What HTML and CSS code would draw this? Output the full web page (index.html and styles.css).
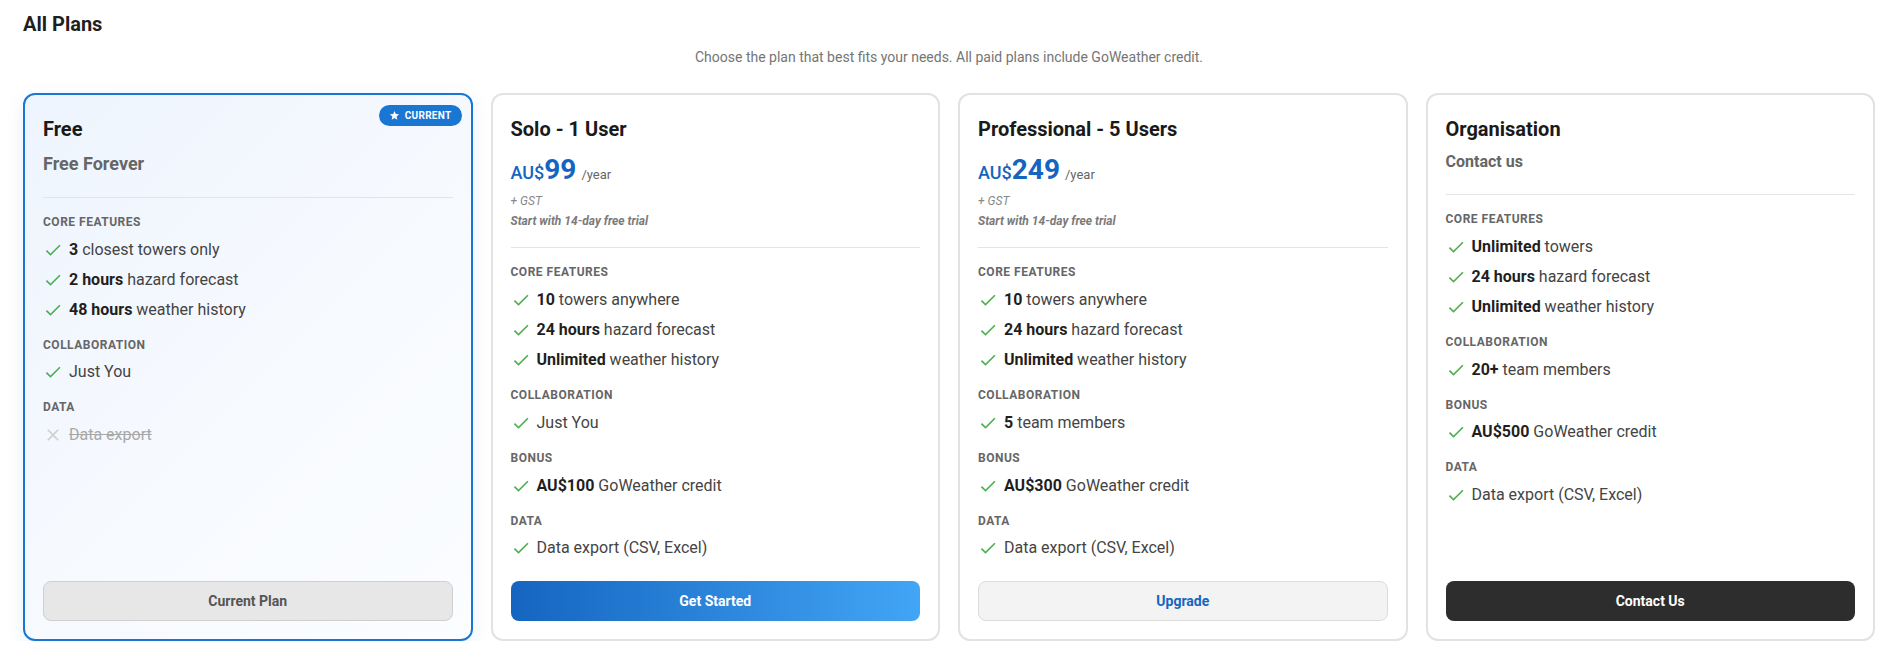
FILE: index.html
```html
<!doctype html>
<html>
<head>
  <title>All Plans</title>
  <link rel="stylesheet" href="styles.css">
</head>
<body>
  <h1>All Plans</h1>
  <p class="intro">Choose the plan that best fits your needs. All paid plans include GoWeather credit.</p>

  <div class="plans">
    <!-- free -->
    <div class="plan current">
      <span class="badge">
        <svg viewBox="0 0 24 24"><path d="M12 17.27 18.18 21l-1.64-7.03L22 9.24l-7.19-.61L12 2 9.19 8.63 2 9.24l5.46 4.73L5.82 21z"/></svg>
        Current
      </span>
      <div class="plan-head">
        <h3>Free</h3>
        <div class="sub">Free Forever</div>
      </div>
      <div class="section">
        <div class="label">Core features</div>
        <ul>
          <li><svg class="ok" viewBox="0 0 24 24"><path d="M9 16.17 4.83 12l-1.42 1.41L9 19 21 7l-1.41-1.41z"/></svg><span><b>3</b> closest towers only</span></li>
          <li><svg class="ok" viewBox="0 0 24 24"><path d="M9 16.17 4.83 12l-1.42 1.41L9 19 21 7l-1.41-1.41z"/></svg><span><b>2 hours</b> hazard forecast</span></li>
          <li><svg class="ok" viewBox="0 0 24 24"><path d="M9 16.17 4.83 12l-1.42 1.41L9 19 21 7l-1.41-1.41z"/></svg><span><b>48 hours</b> weather history</span></li>
        </ul>
      </div>
      <div class="section">
        <div class="label">Collaboration</div>
        <ul>
          <li><svg class="ok" viewBox="0 0 24 24"><path d="M9 16.17 4.83 12l-1.42 1.41L9 19 21 7l-1.41-1.41z"/></svg><span>Just You</span></li>
        </ul>
      </div>
      <div class="section">
        <div class="label">Data</div>
        <ul>
          <li class="off"><svg class="no" viewBox="0 0 24 24"><path d="M19 6.41 17.59 5 12 10.59 6.41 5 5 6.41 10.59 12 5 17.59 6.41 19 12 13.41 17.59 19 19 17.59 13.41 12z"/></svg><span>Data export</span></li>
        </ul>
      </div>
      <button class="btn btn-current">Current Plan</button>
    </div>

    <!-- solo -->
    <div class="plan">
      <div class="plan-head">
        <h3>Solo - 1 User</h3>
        <div class="price"><span class="cur">AU$</span>99<span class="per">/year</span></div>
        <div class="gst">+ GST</div>
        <div class="trial">Start with 14-day free trial</div>
      </div>
      <div class="section">
        <div class="label">Core features</div>
        <ul>
          <li><svg class="ok" viewBox="0 0 24 24"><path d="M9 16.17 4.83 12l-1.42 1.41L9 19 21 7l-1.41-1.41z"/></svg><span><b>10</b> towers anywhere</span></li>
          <li><svg class="ok" viewBox="0 0 24 24"><path d="M9 16.17 4.83 12l-1.42 1.41L9 19 21 7l-1.41-1.41z"/></svg><span><b>24 hours</b> hazard forecast</span></li>
          <li><svg class="ok" viewBox="0 0 24 24"><path d="M9 16.17 4.83 12l-1.42 1.41L9 19 21 7l-1.41-1.41z"/></svg><span><b>Unlimited</b> weather history</span></li>
        </ul>
      </div>
      <div class="section">
        <div class="label">Collaboration</div>
        <ul>
          <li><svg class="ok" viewBox="0 0 24 24"><path d="M9 16.17 4.83 12l-1.42 1.41L9 19 21 7l-1.41-1.41z"/></svg><span>Just You</span></li>
        </ul>
      </div>
      <div class="section">
        <div class="label">Bonus</div>
        <ul>
          <li><svg class="ok" viewBox="0 0 24 24"><path d="M9 16.17 4.83 12l-1.42 1.41L9 19 21 7l-1.41-1.41z"/></svg><span><b>AU$100</b> GoWeather credit</span></li>
        </ul>
      </div>
      <div class="section">
        <div class="label">Data</div>
        <ul>
          <li><svg class="ok" viewBox="0 0 24 24"><path d="M9 16.17 4.83 12l-1.42 1.41L9 19 21 7l-1.41-1.41z"/></svg><span>Data export (CSV, Excel)</span></li>
        </ul>
      </div>
      <button class="btn btn-primary">Get Started</button>
    </div>

    <!-- professional -->
    <div class="plan">
      <div class="plan-head">
        <h3>Professional - 5 Users</h3>
        <div class="price"><span class="cur">AU$</span>249<span class="per">/year</span></div>
        <div class="gst">+ GST</div>
        <div class="trial">Start with 14-day free trial</div>
      </div>
      <div class="section">
        <div class="label">Core features</div>
        <ul>
          <li><svg class="ok" viewBox="0 0 24 24"><path d="M9 16.17 4.83 12l-1.42 1.41L9 19 21 7l-1.41-1.41z"/></svg><span><b>10</b> towers anywhere</span></li>
          <li><svg class="ok" viewBox="0 0 24 24"><path d="M9 16.17 4.83 12l-1.42 1.41L9 19 21 7l-1.41-1.41z"/></svg><span><b>24 hours</b> hazard forecast</span></li>
          <li><svg class="ok" viewBox="0 0 24 24"><path d="M9 16.17 4.83 12l-1.42 1.41L9 19 21 7l-1.41-1.41z"/></svg><span><b>Unlimited</b> weather history</span></li>
        </ul>
      </div>
      <div class="section">
        <div class="label">Collaboration</div>
        <ul>
          <li><svg class="ok" viewBox="0 0 24 24"><path d="M9 16.17 4.83 12l-1.42 1.41L9 19 21 7l-1.41-1.41z"/></svg><span><b>5</b> team members</span></li>
        </ul>
      </div>
      <div class="section">
        <div class="label">Bonus</div>
        <ul>
          <li><svg class="ok" viewBox="0 0 24 24"><path d="M9 16.17 4.83 12l-1.42 1.41L9 19 21 7l-1.41-1.41z"/></svg><span><b>AU$300</b> GoWeather credit</span></li>
        </ul>
      </div>
      <div class="section">
        <div class="label">Data</div>
        <ul>
          <li><svg class="ok" viewBox="0 0 24 24"><path d="M9 16.17 4.83 12l-1.42 1.41L9 19 21 7l-1.41-1.41z"/></svg><span>Data export (CSV, Excel)</span></li>
        </ul>
      </div>
      <button class="btn btn-light">Upgrade</button>
    </div>

    <!-- organisation -->
    <div class="plan">
      <div class="plan-head">
        <h3>Organisation</h3>
        <div class="sub small">Contact us</div>
      </div>
      <div class="section">
        <div class="label">Core features</div>
        <ul>
          <li><svg class="ok" viewBox="0 0 24 24"><path d="M9 16.17 4.83 12l-1.42 1.41L9 19 21 7l-1.41-1.41z"/></svg><span><b>Unlimited</b> towers</span></li>
          <li><svg class="ok" viewBox="0 0 24 24"><path d="M9 16.17 4.83 12l-1.42 1.41L9 19 21 7l-1.41-1.41z"/></svg><span><b>24 hours</b> hazard forecast</span></li>
          <li><svg class="ok" viewBox="0 0 24 24"><path d="M9 16.17 4.83 12l-1.42 1.41L9 19 21 7l-1.41-1.41z"/></svg><span><b>Unlimited</b> weather history</span></li>
        </ul>
      </div>
      <div class="section">
        <div class="label">Collaboration</div>
        <ul>
          <li><svg class="ok" viewBox="0 0 24 24"><path d="M9 16.17 4.83 12l-1.42 1.41L9 19 21 7l-1.41-1.41z"/></svg><span><b>20+</b> team members</span></li>
        </ul>
      </div>
      <div class="section">
        <div class="label">Bonus</div>
        <ul>
          <li><svg class="ok" viewBox="0 0 24 24"><path d="M9 16.17 4.83 12l-1.42 1.41L9 19 21 7l-1.41-1.41z"/></svg><span><b>AU$500</b> GoWeather credit</span></li>
        </ul>
      </div>
      <div class="section">
        <div class="label">Data</div>
        <ul>
          <li><svg class="ok" viewBox="0 0 24 24"><path d="M9 16.17 4.83 12l-1.42 1.41L9 19 21 7l-1.41-1.41z"/></svg><span>Data export (CSV, Excel)</span></li>
        </ul>
      </div>
      <button class="btn btn-dark">Contact Us</button>
    </div>
  </div>
</body>
</html>
```

FILE: styles.css
```css
body {
  font-family: Roboto, "Noto Sans", Arial, sans-serif;
  color: #444;
  margin: 0;
  padding: 10px 26px 0 23px;
  background: #fff;
}

h1 {
  font-size: 20px;
  line-height: 1.4;
  font-weight: 700;
  color: #1f1f1f;
  margin: 0;
}
.intro {
  text-align: center;
  font-size: 14px;
  line-height: 1.4;
  color: #757575;
  margin: 10px 0 25px;
}

.plans {
  display: grid;
  grid-template-columns: repeat(4, 1fr);
  gap: 18px;
}
.plan {
  position: relative;
  display: flex;
  flex-direction: column;
  padding: 20px 18px 18px;
  border: 2px solid #e2e2e2;
  border-radius: 12px;
  background: #fff;
}
.plan.current {
  border-color: #1976d2;
  background: linear-gradient(135deg, #eef5fe 0%, #f6f9fe 50%, #fbfdff 100%);
  box-shadow: 0 4px 18px rgba(25, 118, 210, 0.10);
}

.badge {
  position: absolute;
  top: 10px;
  right: 9px;
  display: flex;
  align-items: center;
  gap: 5px;
  height: 21px;
  padding: 0 10px;
  border-radius: 11px;
  background: #1976d2;
  color: #fff;
  font-size: 10px;
  font-weight: 700;
  letter-spacing: .3px;
  text-transform: uppercase;
}
.badge svg {
  width: 11px;
  height: 11px;
  fill: #fff;
}

.plan-head {
  padding-bottom: 17px;
  border-bottom: 1px solid #e4e4e4;
}
h3 {
  font-size: 20px;
  line-height: 1.4;
  font-weight: 700;
  color: #1a1a1a;
  margin: 0;
}
.sub {
  margin: 8px 0 4px;
  font-size: 18px;
  line-height: 1.4;
  font-weight: 700;
  color: #666;
}
.sub.small {
  font-size: 16px;
}

/* the amount sets the line; currency and period sit on its baseline */
.price {
  margin-top: 8px;
  font-size: 28px;
  font-weight: 700;
  line-height: 38px;
  color: #1565c0;
}
.price .cur {
  font-size: 18px;
  font-weight: 500;
  line-height: 1;
}
.price .per {
  margin-left: 5px;
  font-size: 13px;
  font-weight: 400;
  line-height: 1;
  color: #666;
}
.gst, .trial {
  margin-top: 4px;
  font-size: 12px;
  line-height: 1.4;
  font-style: italic;
  color: #888;
}
.trial {
  font-weight: 700;
  color: #7a7a7a;
}

.section {
  margin-top: 16px;
}
.label {
  font-size: 12px;
  line-height: 1.4;
  font-weight: 700;
  color: #666;
  text-transform: uppercase;
  letter-spacing: .5px;
  margin-bottom: 8px;
}
ul {
  list-style: none;
  margin: 0;
  padding: 0;
}
li {
  display: flex;
  align-items: center;
  gap: 6px;
  font-size: 16px;
  line-height: 22px;
  color: #444;
}
li + li {
  margin-top: 8px;
}
li b {
  color: #1f1f1f;
}
li svg {
  width: 20px;
  height: 20px;
  flex: none;
}
.ok {
  fill: #4caf50;
}
.no {
  fill: #cfcfcf;
}
li.off span {
  color: #a8a8a8;
  text-decoration: line-through;
}

.btn {
  margin-top: auto;
  height: 40px;
  border-radius: 8px;
  font-family: inherit;
  font-size: 14px;
  font-weight: 700;
  cursor: pointer;
}
.section:last-of-type {
  margin-bottom: 22px;
}
.btn-current {
  background: #e7e7e7;
  border: 1px solid #cfcfcf;
  color: #555;
}
.btn-primary {
  background: linear-gradient(90deg, #1565c0, #42a5f5);
  border: 0;
  color: #fff;
}
.btn-light {
  background: #f3f3f3;
  border: 1px solid #dcdcdc;
  color: #1565c0;
}
.btn-dark {
  background: #2d2d2d;
  border: 0;
  color: #fff;
}
```
